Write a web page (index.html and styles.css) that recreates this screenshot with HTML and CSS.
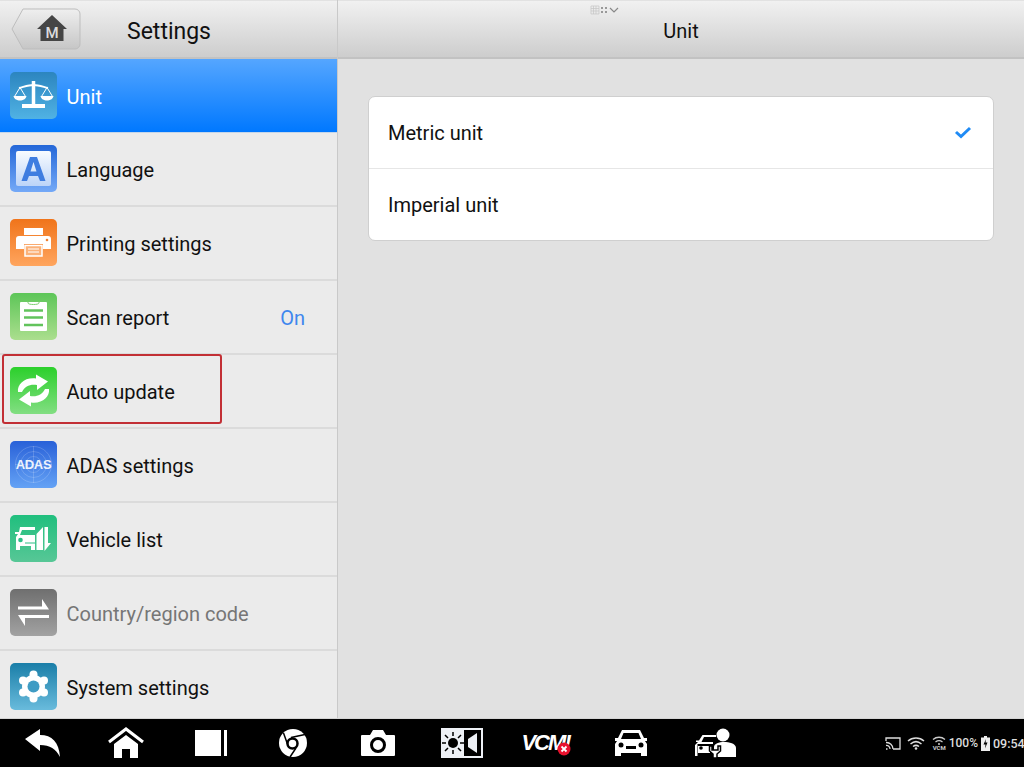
FILE: index.html
```html
<!DOCTYPE html>
<html>
<head>
<meta charset="utf-8">
<title>Settings</title>
<link rel="stylesheet" href="styles.css">
</head>
<body>
<div class="app">
  <div class="main">
    <div class="sidebar">
      <div class="head head-left">
        <a class="back" href="#">
          <svg width="70" height="42" viewBox="0 0 70 42">
            <defs><linearGradient id="bk" x1="0" y1="0" x2="0" y2="1"><stop offset="0" stop-color="#efefef"/><stop offset="1" stop-color="#c6c6c6"/></linearGradient></defs>
            <path d="M12 1H64a5 5 0 0 1 5 5V36a5 5 0 0 1-5 5H12L1 21Z" fill="url(#bk)" stroke="#bdbdbd"/>
            <path d="M41 7L56 21H52.500V33H29.500V21H26Z" fill="#454545"/>
            <text x="41" y="30" text-anchor="middle" class="back-m">M</text>
          </svg>
        </a>
        <span class="head-title">Settings</span>
      </div>
      <ul class="menu">
        <li class="row active">
          <span class="tile t-unit">
            <svg viewBox="0 0 47 47" width="47" height="47">
              <path d="M23.500 9V32" stroke="#fff" stroke-width="3.500"/>
              <path d="M9 16C15 14.500 19 13 23.500 13S32 14.500 38 16" stroke="#fff" stroke-width="2" fill="none"/>
              <path d="M12 32H35V36H12Z" fill="#fff"/>
              <path d="M10 15.500L4.500 24.500H15.500Z M37 15.500L31.500 24.500H42.500Z" stroke="#fff" stroke-width="1" fill="none"/>
              <path d="M3.500 24H16.500C15.500 30 4.500 30 3.500 24Z M30.500 24H43.500C42.500 30 31.500 30 30.500 24Z" fill="#fff"/>
            </svg>
          </span>
          <span class="label">Unit</span>
        </li>
        <li class="row">
          <span class="tile t-lang">
            <span class="lang-inner">
              <svg viewBox="0 0 35 35" width="35" height="35"><path d="M14 6H21L29.500 30H24L22 25H13L11 30H5.500ZM14.500 20.500H20.500L17.500 11Z" fill="#3f7de0" fill-rule="evenodd"/></svg>
            </span>
          </span>
          <span class="label">Language</span>
        </li>
        <li class="row">
          <span class="tile t-print">
            <svg viewBox="0 0 47 47" width="47" height="47">
              <path d="M14 9H33V16H14Z" fill="#fff"/>
              <path d="M9 17H38a3 3 0 0 1 3 3V30H33V25H14V30H6V20a3 3 0 0 1 3-3Z" fill="#fff"/>
              <circle cx="37" cy="21" r="1.300" fill="#f08030"/>
              <path d="M15 26.500H32V37H15Z" fill="#fbb27a" stroke="#fff" stroke-width="1.500"/>
              <path d="M18 30H29M18 33H29" stroke="#fff"/>
            </svg>
          </span>
          <span class="label">Printing settings</span>
        </li>
        <li class="row">
          <span class="tile t-scan">
            <svg viewBox="0 0 47 47" width="47" height="47">
              <path d="M11 9H36a1 1 0 0 1 1 1V37a1 1 0 0 1-1 1H11a1 1 0 0 1-1-1V10a1 1 0 0 1 1-1Z" fill="#fff"/>
              <path d="M18 8.500V10C18 12 29 12 29 10V8.500" stroke="#7ccf70" stroke-width="1" fill="none"/>
              <path d="M14 17.500H33M14 24.500H33M14 32H33" stroke="#62c35c" stroke-width="2.500"/>
            </svg>
          </span>
          <span class="label">Scan report</span>
          <span class="value">On</span>
        </li>
        <li class="row">
          <span class="tile t-auto">
            <svg viewBox="0 0 47 47" width="47" height="47">
              <path d="M8 25C7 17 15 10 26 11.500L26 7.500L38 14.500L27 23V18C20 17 15 19 12 25Z" fill="#fff"/>
              <path d="M8 25C7 17 15 10 26 11.500L26 7.500L38 14.500L27 23V18C20 17 15 19 12 25Z" fill="#fff" transform="rotate(180 23.500 23.500)"/>
            </svg>
          </span>
          <span class="label">Auto update</span>
          <span class="mark"></span>
        </li>
        <li class="row">
          <span class="tile t-adas">
            <svg viewBox="0 0 47 47" width="47" height="47" class="radar">
              <circle cx="23.500" cy="23.500" r="8"/><circle cx="23.500" cy="23.500" r="13"/><circle cx="23.500" cy="23.500" r="18"/>
              <path d="M23.500 5V42M5 23.500H42"/>
            </svg>
            <span class="adas-txt">ADAS</span>
          </span>
          <span class="label">ADAS settings</span>
        </li>
        <li class="row">
          <span class="tile t-veh">
            <svg viewBox="0 0 47 47" width="47" height="47">
              <path d="M10 12H25V15H12L10 20H25V35H21V31H10V35H6V22L8 19H5V17H9Z" fill="#fff"/>
              <circle cx="10.500" cy="25" r="2.300" fill="#2cc086"/>
              <path d="M15 28H25" stroke="#2cc086" stroke-width="1"/>
              <path d="M26.500 35V19L33 12V35ZM34.500 12H38V28H41L34.500 36Z" fill="#fff"/>
            </svg>
          </span>
          <span class="label">Vehicle list</span>
        </li>
        <li class="row">
          <span class="tile t-country">
            <svg viewBox="0 0 47 47" width="47" height="47">
              <path d="M8 17.500H32V10L39 20.500H8ZM39 26V29H15V37L8 26Z" fill="#fff"/>
            </svg>
          </span>
          <span class="label muted">Country/region code</span>
        </li>
        <li class="row">
          <span class="tile t-sys">
            <svg viewBox="0 0 47 47" width="47" height="47">
              <circle cx="23.500" cy="23.500" r="11.500" fill="#fff"/>
              <g fill="#fff">
                <circle cx="23.500" cy="11.500" r="4"/><circle cx="23.500" cy="35.500" r="4"/>
                <circle cx="13" cy="17.500" r="4"/><circle cx="34" cy="17.500" r="4"/>
                <circle cx="13" cy="29.500" r="4"/><circle cx="34" cy="29.500" r="4"/>
              </g>
              <circle cx="23.500" cy="23.500" r="6" fill="#3f9cc4"/>
            </svg>
          </span>
          <span class="label">System settings</span>
        </li>
      </ul>
    </div>
    <div class="content">
      <div class="head head-right">
        <span class="head-title">Unit</span>
        <span class="handle">
          <svg width="29" height="10" viewBox="0 0 29 10">
            <path d="M1 1H9V9H1ZM1 3.500H9M1 6H9M3.500 1V9M6 1V9" stroke="#c4c4c4" fill="none" stroke-width=".7"/>
            <path d="M11 2h2v2h-2zM15 2h2v2h-2zM11 6h2v2h-2zM15 6h2v2h-2z" fill="#999"/>
            <path d="M20 3L24 7L28 3" stroke="#888" stroke-width="1.200" fill="none"/>
          </svg>
        </span>
      </div>
      <div class="panel">
        <div class="card">
          <div class="opt">
            <span>Metric unit</span>
            <svg width="18" height="14" viewBox="0 0 18 14"><path d="M2 6L7 10.500L16 2" stroke="#1f8bf5" stroke-width="3" fill="none"/></svg>
          </div>
          <div class="opt"><span>Imperial unit</span></div>
        </div>
      </div>
    </div>
  </div>
  <div class="bar">
    <span class="cell">
      <svg width="38" height="30" viewBox="0 0 38 30"><path d="M1 11L16 1V7C28 7 35 14 36 29C32 21 26 17 16 17V23Z" fill="#fff"/></svg>
    </span>
    <span class="cell">
      <svg class="nudge-1" width="36" height="32" viewBox="0 0 36 32"><path d="M1 15L18 2L35 15" stroke="#fff" stroke-width="3" fill="none"/><path d="M18 8L30 17V31H22V22H14V31H6V17Z" fill="#fff"/></svg>
    </span>
    <span class="cell">
      <svg width="32" height="26" viewBox="0 0 32 26"><path d="M0 0H26V26H0ZM29 0H32V26H29Z" fill="#fff"/></svg>
    </span>
    <span class="cell">
      <svg class="nudge-2" width="30" height="30" viewBox="0 0 30 30">
        <circle cx="15" cy="15" r="14" fill="#fff"/>
        <path d="M13 9.500L27 6.500M10 17.500L5.500 5M18 20L12 29" stroke="#000" stroke-width="1.500"/>
        <circle cx="14.500" cy="15.500" r="5" fill="#fff" stroke="#000" stroke-width="2.500"/>
      </svg>
    </span>
    <span class="cell">
      <svg class="nudge-1" width="34" height="26" viewBox="0 0 34 26">
        <path d="M1 5H9L12 0H22L25 5H33a1 1 0 0 1 1 1V25a1 1 0 0 1-1 1H1a1 1 0 0 1-1-1V6a1 1 0 0 1 1-1Z" fill="#fff"/>
        <circle cx="17" cy="15" r="6.500" fill="none" stroke="#000" stroke-width="3"/>
      </svg>
    </span>
    <span class="cell">
      <svg class="nudge-1" width="42" height="30" viewBox="0 0 42 30">
        <path d="M0 0H42V30H0Z" fill="#eef1f6"/>
        <path d="M23 2H40V28H23Z" fill="#000"/>
        <path d="M27 11L36 5V25L27 19Z" fill="#eef1f6"/>
        <circle cx="12" cy="15" r="5" fill="#000"/>
        <path d="M12 4V8M12 22V26M1 15H5M19 15H23M4 7L7 10M20 7L17 10M4 23L7 20M20 23L17 20" stroke="#000" stroke-width="1.500"/>
      </svg>
    </span>
    <span class="cell vcm-cell">
      <span class="vcm">VCM!</span>
      <svg class="vcm-x" width="14" height="14" viewBox="0 0 14 14"><circle cx="7" cy="7" r="6.500" fill="#e8112d"/><path d="M4.500 4.500L9.500 9.500M9.500 4.500L4.500 9.500" stroke="#fff" stroke-width="1.800"/></svg>
    </span>
    <span class="cell">
      <svg width="34" height="28" viewBox="0 0 34 28">
        <path d="M8 1H26L30 9H33V12H31L33 15V27H27V24H7V27H1V15L3 12H1V9H4ZM9.500 4L7 10H27L24.500 4Z" fill="#fff" fill-rule="evenodd"/>
        <circle cx="7" cy="16" r="2.500"/><circle cx="27" cy="16" r="2.500"/>
        <path d="M12 17H22V20H12Z"/>
      </svg>
    </span>
    <span class="cell">
      <svg width="41" height="30" viewBox="0 0 41 30">
        <circle cx="28" cy="7" r="6.500" fill="#fff"/>
        <path d="M19 29V19C19 15.500 24 14 29 14S41 15.500 41 20V29Z" fill="#fff"/>
        <path d="M0 28V17L3 14H1V12.500H4L7.500 7H21V9H9L6.500 14H18V16H2.500V28Z" fill="#fff"/>
        <path d="M3 18H15V25H3Z" fill="#fff"/>
        <circle cx="6" cy="20" r="1.800"/>
        <path d="M14.500 18V23L18 26V30H22V26L25.500 23V18H23V22H17V18Z" fill="#fff" stroke="#000" stroke-width="1.500"/>
      </svg>
    </span>
    <span class="status">
      <svg width="16" height="13" viewBox="0 0 16 13" class="cast"><path d="M1 4V1H15V12H8M1 12H2.500M1 8.500A3.500 3.500 0 0 1 5 12M1 5.500A6.500 6.500 0 0 1 8 12" stroke="#ddd" stroke-width="1.300" fill="none"/></svg>
      <svg width="18" height="14" viewBox="0 0 18 14"><path d="M1 5C5.500 1 12.500 1 17 5M3.500 8C7 5 11 5 14.500 8M6 10.500C8 9 10 9 12 10.500" stroke="#ddd" stroke-width="1.500" fill="none"/><circle cx="9" cy="12.500" r="1.300" fill="#ddd"/></svg>
      <span class="wifi-vcm">
        <svg width="14" height="9" viewBox="0 0 14 9"><path d="M1 3.500C4.500 .5 9.500 .5 13 3.500M3.500 6C5.500 4.500 8.500 4.500 10.500 6" stroke="#ccc" stroke-width="1.300" fill="none"/><circle cx="7" cy="8" r="1" fill="#ccc"/></svg>
        <span class="wifi-lbl">VCM</span>
      </span>
      <span class="pct">100%</span>
      <svg width="9" height="15" viewBox="0 0 9 15" class="batt"><path d="M3 0H6V1.500H9V15H0V1.500H3Z" fill="#eee"/><path d="M5 3L2.500 8.500H4.500L4 12.500L6.500 6.500H4.500Z" fill="#000"/></svg>
      <span class="clock">09:54</span>
    </span>
  </div>
</div>
</body>
</html>
```

FILE: styles.css
```css
*{
box-sizing:border-box;
}
body{
margin:0;
font-family:Roboto,"Liberation Sans",sans-serif;
color:#111;
}
.app{
width:1024px;
height:767px;
display:flex;
flex-direction:column;
overflow:hidden;
}
.main{
height:719px;
display:flex;
border-bottom:1px solid #d4d4d4;
}

/* header strip shared by both columns */
.head{
height:59px;
display:flex;
align-items:center;
background:linear-gradient(#f1f1f1,#cdcdcd);
border-top:1px solid #e2e2e2;
border-bottom:2px solid #c2c2c2;
}
.head-title{
font-size:23px;
padding-top:4px;
}
.head-left{
padding-left:11px;
}
.head-left .head-title{
margin-left:46px;
}
.head-right{
justify-content:center;
position:relative;
}
.head-right .head-title{
font-size:20px;
}
.back{
display:block;
width:70px;
height:42px;
}
.back-m{
font-family:Roboto,sans-serif;
font-size:15px;
font-weight:500;
fill:#dcdcdc;
}
.handle{
position:absolute;
left:252px;
top:-1px;
width:29px;
height:10px;
}

/* left menu */
.sidebar{
width:338px;
flex:none;
background:#ebebeb;
border-right:1px solid #c9c9c9;
}
.menu{
list-style:none;
margin:0;
padding:0;
}
.row{
height:74px;
display:flex;
align-items:center;
padding:0 32px 1px 10px;
border-bottom:2px solid #dbdbdb;
font-size:20px;
position:relative;
}
.row:last-child{
border-bottom-color:transparent;
}
.active{
color:#fff;
background:linear-gradient(#55a6ff,#0078ff);
border-bottom:1px solid #c4d6ea;
}
.label{
margin-left:9.500px;
padding-top:3px;
}
.muted{
color:#767676;
}
.value{
margin-left:auto;
padding-top:3px;
color:#3f87ee;
}
.mark{
position:absolute;
left:2px;
top:-1px;
width:220px;
height:70px;
border:2px solid #c22f35;
border-radius:3px;
}

/* icon tiles */
.tile{
width:47px;
height:47px;
flex:none;
border-radius:5px;
display:block;
position:relative;
}
.tile svg{
display:block;
}
.t-unit{background:linear-gradient(#2c85bf,#50b2e4);}
.t-lang{background:linear-gradient(#2467d8,#74a9f7);padding:6px;}
.t-print{background:linear-gradient(#f0741a,#ffa55e);}
.t-scan{background:linear-gradient(#5dc658,#abde8e);}
.t-auto{background:linear-gradient(#2bd02b,#82de82);}
.t-adas{background:linear-gradient(#2961d8,#64a2f5);}
.t-veh{background:linear-gradient(#20bf7e,#57c796);}
.t-country{background:linear-gradient(#6f6f6f,#a2a2a2);}
.t-sys{background:linear-gradient(#1a7ea8,#69bbdc);}
.lang-inner{
display:block;
width:35px;
height:35px;
border-radius:2px;
background:linear-gradient(#f8fbff,#bcd4f8);
}
.radar{
fill:none;
stroke:rgba(255,255,255,.25);
stroke-width:.7;
}
.adas-txt{
position:absolute;
left:0;
right:0;
top:15px;
text-align:center;
color:#fff;
font-family:"Liberation Sans",sans-serif;
font-size:13px;
line-height:17px;
font-weight:bold;
letter-spacing:-.3px;
opacity:.9;
}

/* right side */
.content{
flex:1;
display:flex;
flex-direction:column;
background:#e1e1e1;
}
.panel{
padding:37px 30px 0;
}
.card{
background:#fff;
border:1px solid #cfcfcf;
border-radius:7px;
}
.opt{
height:71px;
display:flex;
align-items:center;
justify-content:space-between;
padding:0 21px 0 19px;
font-size:20px;
}
.opt + .opt{
height:72px;
border-top:1px solid #e6e6e6;
}

/* bottom navigation */
.bar{
flex:1;
background:#000;
display:flex;
align-items:center;
padding-left:1px;
}
.cell{
width:84px;
display:flex;
justify-content:center;
align-items:center;
position:relative;
}
.nudge-1{
margin-right:2px;
}
.nudge-2{
margin-right:4px;
}
.vcm{
color:#fff;
font-family:"Liberation Sans",sans-serif;
font-weight:bold;
font-style:italic;
font-size:22px;
letter-spacing:-2px;
margin-right:3px;
}
.vcm-x{
position:absolute;
left:52px;
top:12px;
}
.status{
margin-left:auto;
display:flex;
align-items:center;
color:#ddd;
font-size:12px;
white-space:nowrap;
}
.status svg{
display:block;
}
.cast{
margin-right:6px;
}
.wifi-vcm{
margin-left:7px;
display:flex;
flex-direction:column;
align-items:center;
width:15px;
}
.wifi-lbl{
font-size:6px;
line-height:6px;
font-weight:bold;
color:#ccc;
}
.pct{
margin-left:2px;
font-weight:500;
}
.batt{
margin:0 3px 0 3px;
}
.clock{
font-size:12.500px;
font-weight:500;
width:31px;
}
```
